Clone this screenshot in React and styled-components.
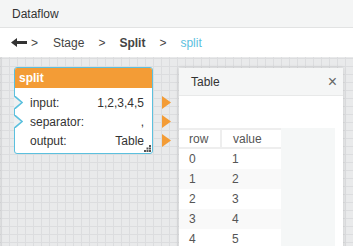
import React from 'react'
import styled, { createGlobalStyle } from 'styled-components'

const GlobalStyle = createGlobalStyle`
  html, body {
    margin: 0;
    padding: 0;
  }
  body {
    font-family: "Liberation Sans", Arial, sans-serif;
    color: #333;
  }
`

const Page = styled.div`
  display: flex;
  flex-direction: column;
  height: 246px;
  overflow: hidden;
`

const TitleBar = styled.div`
  height: 27px;
  flex-shrink: 0;
  display: flex;
  align-items: center;
  padding-left: 12px;
  background: #f4f5f5;
  border-bottom: 1px solid #e2e3e3;
  font-size: 12px;
  color: #333;
`

const Crumbs = styled.div`
  height: 29px;
  flex-shrink: 0;
  display: flex;
  align-items: center;
  padding-left: 11px;
  background: #fff;
  font-size: 12px;
  color: #444;
`

const BackButton = styled.span`
  display: flex;
  align-items: center;
  margin-right: 4px;
`

const Sep = styled.span`
  margin: 0 ${p => (p.$first ? '15px 0 0' : '14px')};
  color: #444;
`

const Crumb = styled.span`
  font-weight: ${p => (p.$bold ? 'bold' : 'normal')};
  color: ${p => (p.$active ? '#5bc0de' : '#444')};
`

const Canvas = styled.div`
  flex: 1;
  position: relative;
  background-color: #e9eaeb;
  background-image:
    linear-gradient(to right, #dcdddf 1px, transparent 1px),
    linear-gradient(to bottom, #dcdddf 1px, transparent 1px);
  background-size: 8px 8px;
  background-position: 1px 1px;
  box-shadow: inset 2px 0 2px -1px rgba(0, 0, 0, 0.08);
`

const Node = styled.div`
  position: absolute;
  left: 14px;
  top: 10px;
  width: 137px;
  background: #fff;
  border: 1px solid #5bc0de;
  border-radius: 3px;
`

const NodeHeader = styled.div`
  height: 20px;
  display: flex;
  align-items: center;
  padding-left: 4px;
  background: #f39c36;
  border-radius: 2px 2px 0 0;
  color: #fff;
  font-size: 12px;
  font-weight: bold;
`

const NodeBody = styled.div`
  padding: 5px 0 3px;
`

const Row = styled.div`
  position: relative;
  height: 19px;
  display: flex;
  align-items: center;
  justify-content: space-between;
  padding: 0 8px 0 15px;
  font-size: 12px;
  color: #333;
`

const InPort = styled.svg`
  position: absolute;
  left: -1px;
  top: 3px;
`

const OutPort = styled.svg`
  position: absolute;
  right: -19px;
  top: 3px;
`

const Grip = styled.svg`
  position: absolute;
  right: 1px;
  bottom: 1px;
`

const Panel = styled.div`
  position: absolute;
  left: 179px;
  top: 11px;
  width: 164px;
  bottom: -10px;
  background: #fff;
  box-shadow: 0 0 4px rgba(0, 0, 0, 0.15);
`

const PanelHeader = styled.div`
  height: 27px;
  display: flex;
  align-items: center;
  justify-content: space-between;
  padding: 0 6px 0 12px;
  background: #f5f6f6;
  border-bottom: 1px solid #e8e9e9;
  font-size: 12px;
  color: #333;
`

const Close = styled.span`
  font-size: 16px;
  color: #666;
  line-height: 1;
`

const TableWrap = styled.div`
  margin-top: 32px;
  width: 156px;
  height: 140px;
  background: #f5f7f7;
`

const Table = styled.table`
  width: 102px;
  border-collapse: collapse;
  background: #fff;
  font-size: 12px;
  color: #555;
`

const Th = styled.th`
  height: 17px;
  padding: 0 0 0 ${p => p.$pad}px;
  text-align: left;
  font-weight: normal;
  border-top: 2px solid #eeeeee;
  border-bottom: 2px solid #eeeeee;
  border-right: ${p => (p.$divide ? '2px solid #eeeeee' : 'none')};
`

const Tr = styled.tr`
  background: ${p => (p.$odd ? '#f9f9f9' : '#fff')};
`

const Td = styled.td`
  height: 20px;
  padding: 0 0 0 ${p => p.$pad}px;
`

const rows = [
  { label: 'input:', value: '1,2,3,4,5', input: true },
  { label: 'separator:', value: ',', input: true },
  { label: 'output:', value: 'Table', input: false },
]

const BackArrow = () => (
  <svg width="16" height="9" viewBox="0 0 16 9">
    <polygon points="0,4.5 6,0 6,3 16,3 16,6 6,6 6,9" fill="#333" />
  </svg>
)

export default function App() {
  return (
    <>
      <GlobalStyle />
      <Page>
        <TitleBar>Dataflow</TitleBar>
        <Crumbs>
          <BackButton><BackArrow /></BackButton>
          <Sep $first>&gt;</Sep>
          <Crumb>Stage</Crumb>
          <Sep>&gt;</Sep>
          <Crumb $bold>Split</Crumb>
          <Sep>&gt;</Sep>
          <Crumb $active>split</Crumb>
        </Crumbs>
        <Canvas>
          <Node>
            <NodeHeader>split</NodeHeader>
            <NodeBody>
              {rows.map(r => (
                <Row key={r.label}>
                  {r.input && (
                    <InPort width="9" height="13" viewBox="0 0 9 13">
                      <polygon points="0,0 8,6.5 0,13" fill="#eef0f1" />
                      <polyline points="0.5,0 8,6.5 0.5,13" fill="none" stroke="#5bc0de" strokeWidth="1.6" />
                    </InPort>
                  )}
                  <span>{r.label}</span>
                  <span>{r.value}</span>
                  <OutPort width="9" height="13" viewBox="0 0 9 13">
                    <polygon points="0,0 9,6.5 0,13" fill="#f39c36" />
                  </OutPort>
                </Row>
              ))}
            </NodeBody>
            <Grip width="7" height="7" viewBox="0 0 7 7">
              <rect x="5" y="0" width="2" height="2" fill="#555" />
              <rect x="2.5" y="2.5" width="2" height="2" fill="#555" />
              <rect x="5" y="2.5" width="2" height="2" fill="#555" />
              <rect x="0" y="5" width="2" height="2" fill="#555" />
              <rect x="2.5" y="5" width="2" height="2" fill="#555" />
              <rect x="5" y="5" width="2" height="2" fill="#555" />
            </Grip>
          </Node>
          <Panel>
            <PanelHeader>
              Table
              <Close>×</Close>
            </PanelHeader>
            <TableWrap>
              <Table>
                <thead>
                  <tr>
                    <Th $pad={10} $divide style={{ width: 31 }}>row</Th>
                    <Th $pad={11}>value</Th>
                  </tr>
                </thead>
                <tbody>
                  {[1, 2, 3, 4, 5].map((v, i) => (
                    <Tr key={v} $odd={i % 2 === 1}>
                      <Td $pad={10}>{i}</Td>
                      <Td $pad={11}>{v}</Td>
                    </Tr>
                  ))}
                </tbody>
              </Table>
            </TableWrap>
          </Panel>
        </Canvas>
      </Page>
    </>
  )
}
